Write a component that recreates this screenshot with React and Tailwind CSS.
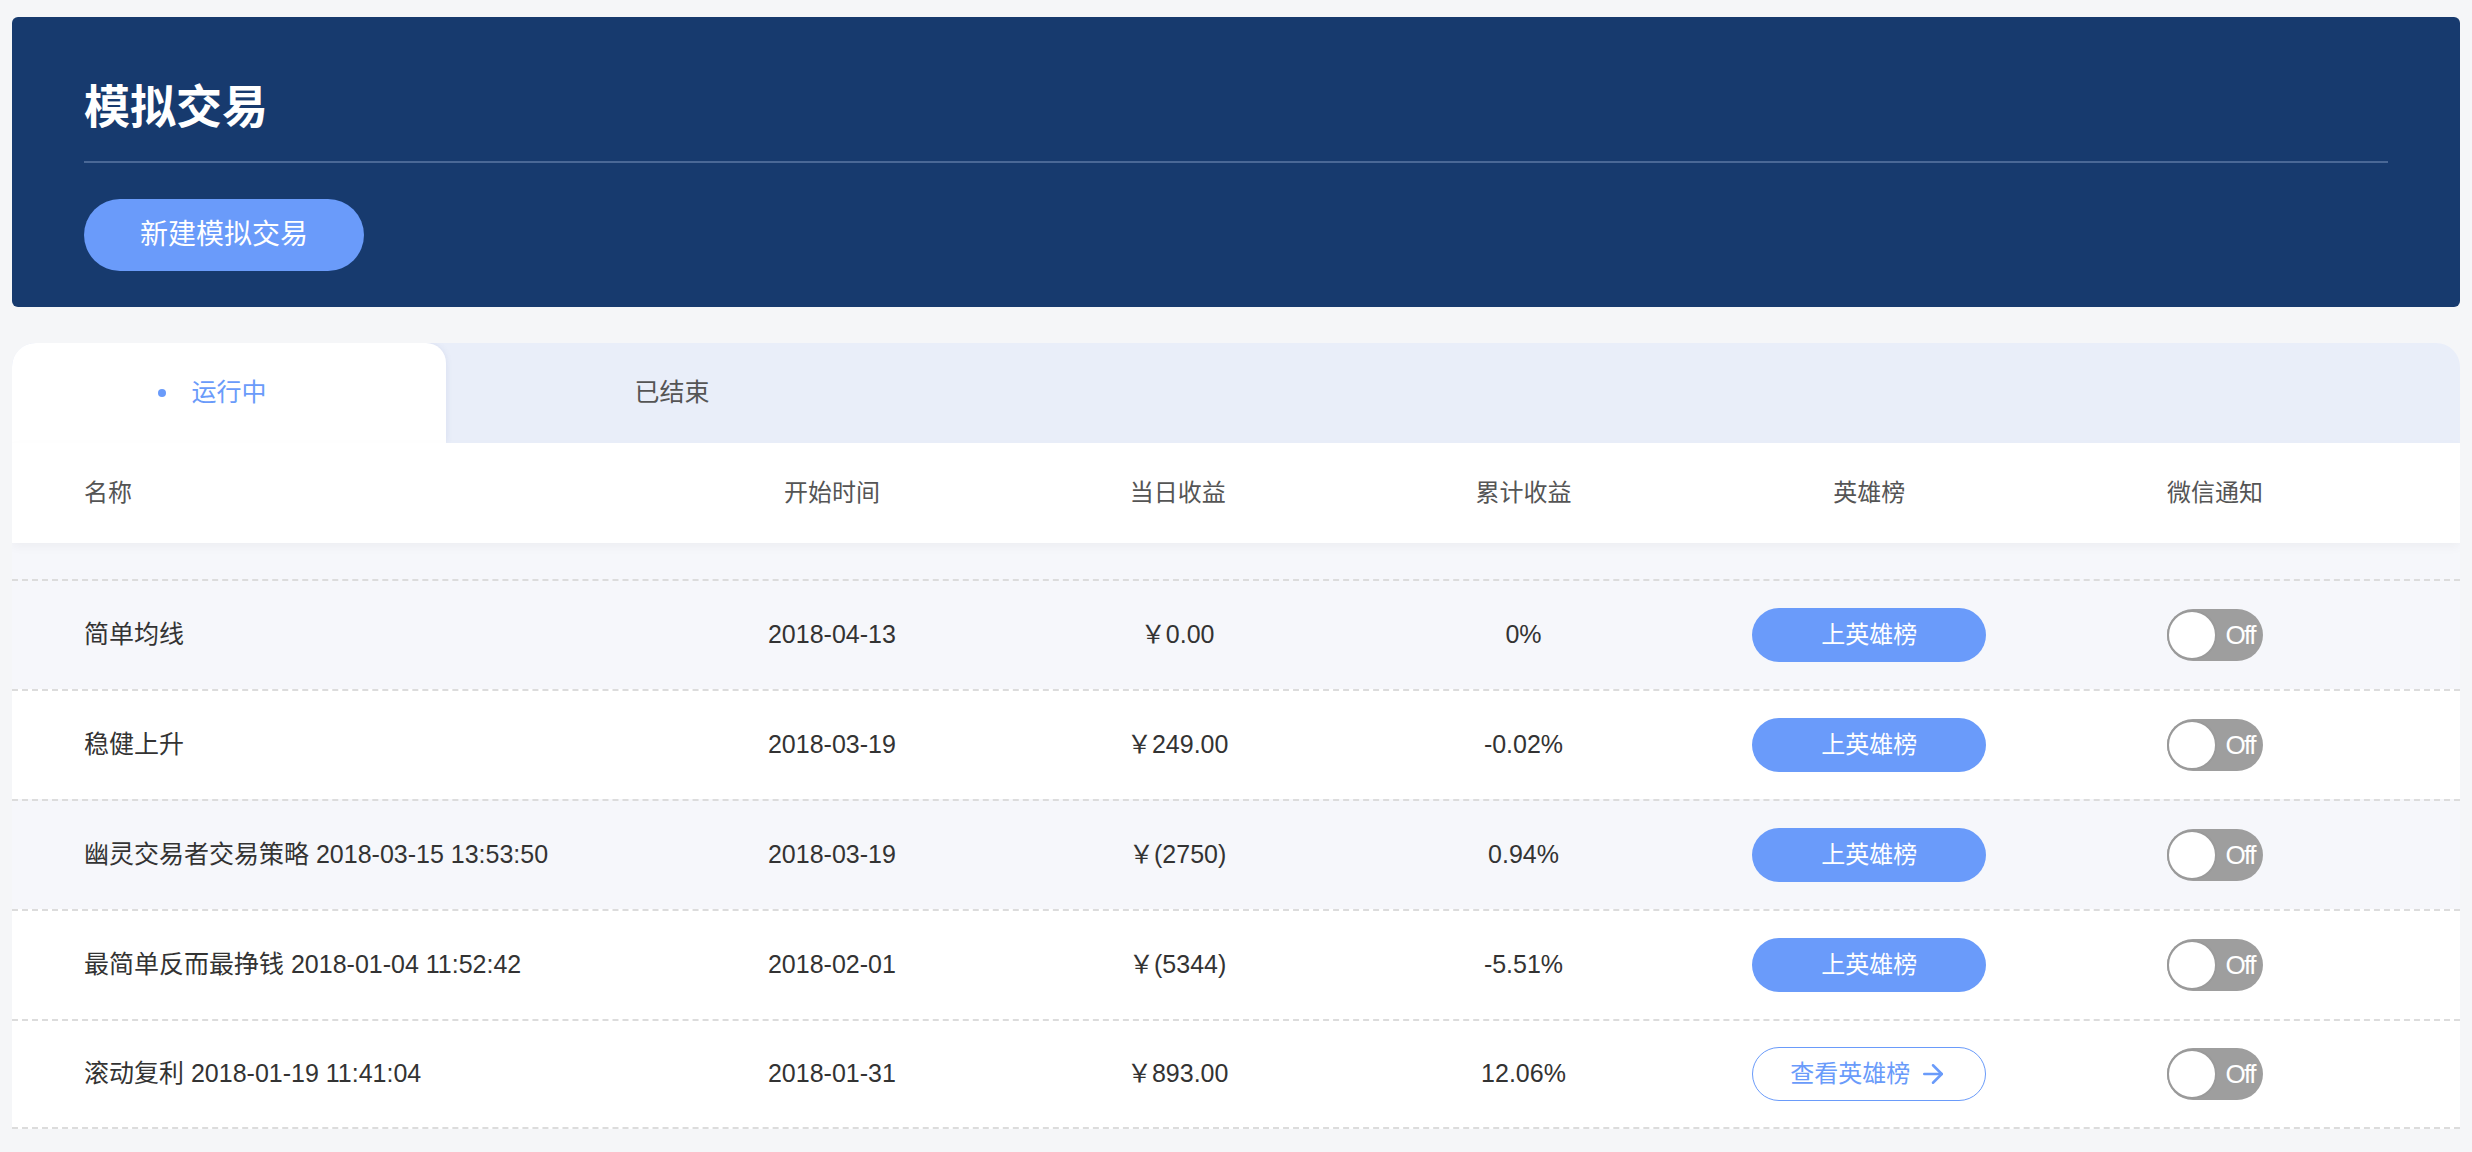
import { ArrowRight } from 'lucide-react';

const rows = [
  { name: '简单均线', start: '2018-04-13', today: '￥0.00', total: '0%', ranked: false, shaded: true },
  { name: '稳健上升', start: '2018-03-19', today: '￥249.00', total: '-0.02%', ranked: false, shaded: false },
  { name: '幽灵交易者交易策略 2018-03-15 13:53:50', start: '2018-03-19', today: '￥(2750)', total: '0.94%', ranked: false, shaded: true },
  { name: '最简单反而最挣钱 2018-01-04 11:52:42', start: '2018-02-01', today: '￥(5344)', total: '-5.51%', ranked: false, shaded: false },
  { name: '滚动复利 2018-01-19 11:41:04', start: '2018-01-31', today: '￥893.00', total: '12.06%', ranked: true, shaded: false },
];

const columns = ['开始时间', '当日收益', '累计收益', '英雄榜', '微信通知'];

function Toggle() {
  return (
    <div className="relative h-[52px] w-[96px] rounded-full bg-[#9e9e9e]">
      <div className="absolute left-0 top-[1px] h-[50px] w-[50px] rounded-full border-2 border-[#9a9a9a] bg-white" />
      <span className="absolute right-[8px] top-1/2 -translate-y-1/2 text-[26px] tracking-[-1.5px] text-white">Off</span>
    </div>
  );
}

export default function App() {
  return (
    <div
      className="min-h-screen bg-[#f5f6f8] px-[12px] pt-[17px]"
      style={{ fontFamily: '"Liberation Sans", "Noto Sans CJK SC", sans-serif' }}
    >
      {/* header banner */}
      <div className="rounded-md bg-[#173a6e] px-[72px] pt-[64px] pb-[36px]">
        <h1 className="text-[46px] font-bold leading-[52px] text-white">模拟交易</h1>
        <div className="mt-[28px] h-[2px] bg-[#4a6896]" />
        <button className="mt-[36px] flex h-[72px] w-[280px] items-center justify-center rounded-full bg-[#6a9bfa] text-[28px] text-white">
          新建模拟交易
        </button>
      </div>

      {/* list card */}
      <div className="mt-[36px] overflow-hidden rounded-t-[24px] bg-[#f6f7fb]">
        <div className="flex h-[100px] bg-[#e9eef9]">
          <div className="flex w-[434px] items-center justify-center rounded-t-[20px] bg-white shadow-[0_0_6px_rgba(90,110,170,0.12)]">
            <span className="relative text-[25px] text-[#6a9bfa]">
              <span className="absolute left-[-33px] top-1/2 h-[8px] w-[8px] -translate-y-1/2 rounded-full bg-[#6a9bfa]" />
              运行中
            </span>
          </div>
          <div className="flex w-[452px] items-center justify-center text-[25px] text-[#555]">已结束</div>
        </div>

        <div className="relative z-10 grid h-[100px] grid-cols-[575px_repeat(5,1fr)] items-center bg-white px-[72px] text-[24px] text-[#555] shadow-[0_4px_10px_rgba(0,0,0,0.04)]">
          <div>名称</div>
          {columns.map((c) => (
            <div key={c} className="text-center">{c}</div>
          ))}
        </div>

        <div className="pt-[36px]">
          {rows.map((r, i) => (
            <div
              key={i}
              className={`grid h-[110px] grid-cols-[575px_repeat(5,1fr)] items-center border-t-2 border-dashed border-[#dcdcdc] px-[72px] text-[25px] text-[#333] ${
                r.shaded ? 'bg-[#f6f7fb]' : 'bg-white'
              } ${i === rows.length - 1 ? 'border-b-2' : ''}`}
            >
              <div className="whitespace-nowrap">{r.name}</div>
              <div className="text-center">{r.start}</div>
              <div className="text-center">{r.today}</div>
              <div className="text-center">{r.total}</div>
              <div className="flex justify-center">
                {r.ranked ? (
                  <button className="flex h-[54px] w-[234px] items-center justify-center gap-[8px] rounded-full border border-[#6a9bfa] bg-white text-[24px] text-[#6a9bfa]">
                    查看英雄榜
                    <ArrowRight size={30} strokeWidth={2} />
                  </button>
                ) : (
                  <button className="flex h-[54px] w-[234px] items-center justify-center rounded-full bg-[#6a9bfa] text-[24px] text-white">
                    上英雄榜
                  </button>
                )}
              </div>
              <div className="flex justify-center">
                <Toggle />
              </div>
            </div>
          ))}
        </div>
      </div>
    </div>
  );
}
